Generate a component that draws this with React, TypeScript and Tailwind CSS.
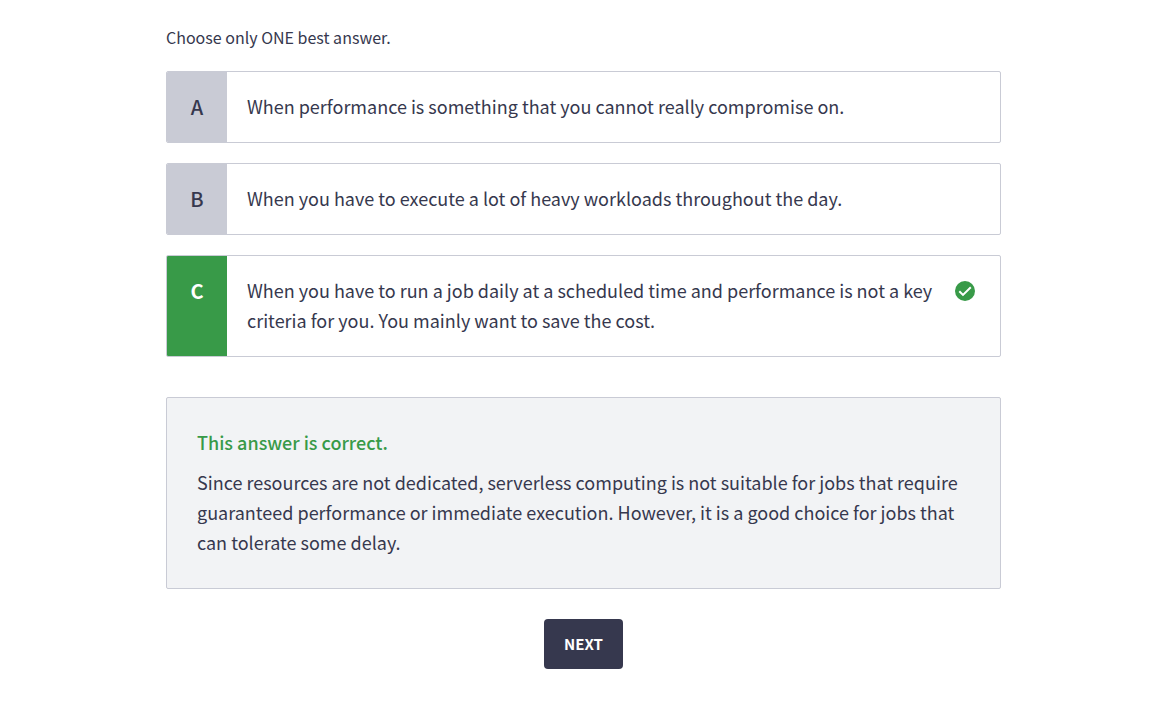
import { useState } from "react";

type Option = { letter: string; text: string };

const options: Option[] = [
  { letter: "A", text: "When performance is something that you cannot really compromise on." },
  { letter: "B", text: "When you have to execute a lot of heavy workloads throughout the day." },
  {
    letter: "C",
    text: "When you have to run a job daily at a scheduled time and performance is not a key criteria for you. You mainly want to save the cost.",
  },
];

const correct = "C";

function CheckBadge() {
  return (
    <svg viewBox="0 0 20 20" className="size-5" aria-hidden="true">
      <circle cx="10" cy="10" r="10" fill="#389a48" />
      <path d="M4.3 10.2 8 13.9 15.8 6.2" fill="none" stroke="#fff" strokeWidth="2" />
    </svg>
  );
}

function AnswerOption({ option, selected, onSelect }: { option: Option; selected: boolean; onSelect: () => void }) {
  return (
    <button
      type="button"
      aria-pressed={selected}
      onClick={onSelect}
      className="flex w-full cursor-pointer items-stretch overflow-hidden rounded-xs border border-[#c9cbd5] bg-white text-left"
    >
      <span
        className={
          selected
            ? "w-15 shrink-0 bg-[#389a48] py-5 text-center text-[20px] leading-[30px] font-bold text-white"
            : "w-15 shrink-0 bg-[#c9cbd5] py-5 text-center text-[20px] leading-[30px] font-medium"
        }
      >
        {option.letter}
      </span>
      <span className="flex-1 pt-[19px] pb-[21px] pl-5">{option.text}</span>
      <span className="flex w-[65px] shrink-0 justify-end py-[25px] pr-[25px]">{selected && <CheckBadge />}</span>
    </button>
  );
}

export default function App() {
  const [selected, setSelected] = useState(correct);

  return (
    <main className="min-h-screen bg-white pt-6 pr-4 pb-12 pl-[23px] font-['Noto_Sans_CJK_SC',sans-serif] text-[18px] leading-[30px] text-[#36384e]">
      <div className="mx-auto flex max-w-[835px] flex-col">
        <p className="text-base leading-[27px]">Choose only ONE best answer.</p>
        <div className="mt-5 flex flex-col gap-5">
          {options.map((option) => (
            <AnswerOption
              key={option.letter}
              option={option}
              selected={option.letter === selected}
              onSelect={() => setSelected(option.letter)}
            />
          ))}
        </div>
        {selected === correct && (
          <section className="mt-10 rounded-xs border border-[#c9cbd5] bg-[#f2f3f5] px-[30px] pt-[29px] pb-[31px]">
            <h2 className="font-medium text-[#389a48]">This answer is correct.</h2>
            <p className="mt-2.5">
              Since resources are not dedicated, serverless computing is not suitable for jobs that require guaranteed
              performance or immediate execution. However, it is a good choice for jobs that can tolerate some delay.
            </p>
          </section>
        )}
        <button
          type="button"
          className="mt-[30px] h-[50px] cursor-pointer self-center rounded-sm bg-[#36384e] px-5 text-[15px] font-bold text-white"
        >
          NEXT
        </button>
      </div>
    </main>
  );
}
